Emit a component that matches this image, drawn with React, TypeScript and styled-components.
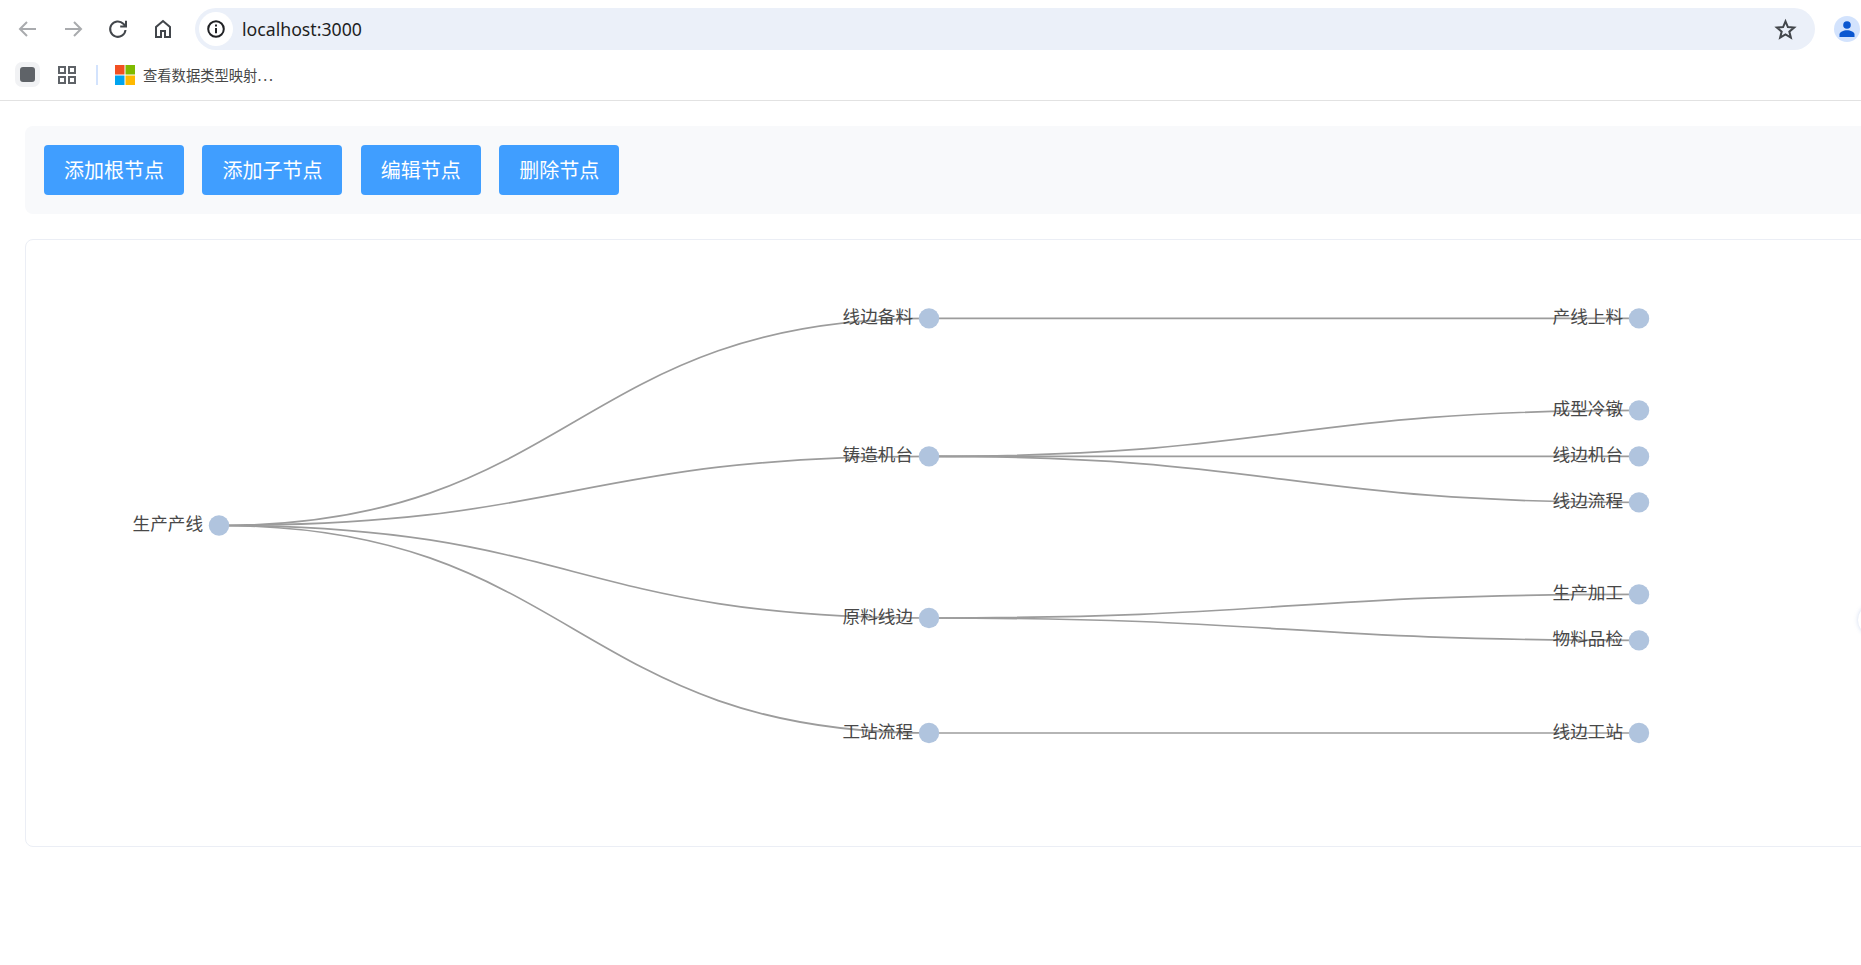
import React from "react";
import styled, { createGlobalStyle } from "styled-components";

const Global = createGlobalStyle`
  html, body { margin: 0; padding: 0; background: #fff; overflow: hidden; width: 1861px; height: 965px; }
  body { font-family: "Noto Sans CJK SC", "Liberation Sans", sans-serif; }
`;

const Page = styled.div`
  position: relative;
  width: 1861px;
  height: 965px;
  overflow: hidden;
  background: #fff;
`;

const Chrome = styled.header`
  height: 100px;
  border-bottom: 1px solid #e2e2e2;
  border-top-left-radius: 8px;
  display: flex;
  flex-direction: column;
  box-sizing: content-box;
`;

const NavRow = styled.div`
  height: 42px;
  margin-top: 8px;
  display: flex;
  align-items: center;
`;

const NavIcons = styled.div`
  width: 195px;
  padding-left: 16px;
  box-sizing: border-box;
  display: flex;
  align-items: center;
  gap: 21px;
  flex: none;
`;

const NavIcon = styled.svg<{ $dim?: boolean }>`
  width: 24px;
  height: 24px;
  flex: none;
  fill: none;
  stroke: ${(p) => (p.$dim ? "#a9abae" : "#42464b")};
  stroke-width: 2;
`;

const UrlBar = styled.div`
  width: 1620px;
  height: 42px;
  border-radius: 21px;
  background: #ebf0f9;
  display: flex;
  align-items: center;
  padding: 0 18.5px 0 4px;
  box-sizing: border-box;
  flex: none;
`;

const InfoBadge = styled.span`
  width: 34px;
  height: 34px;
  border-radius: 50%;
  background: #fff;
  display: flex;
  align-items: center;
  justify-content: center;
  flex: none;
`;

const UrlText = styled.span`
  margin-left: 9px;
  flex: 1;
  font-family: "Noto Sans", "Liberation Sans", sans-serif;
  font-size: 17.7px;
  color: #1f1f1f;
`;

const StarIcon = styled.svg`
  width: 23px;
  height: 23px;
  flex: none;
  fill: none;
  stroke: #42464b;
  stroke-width: 2.1;
`;

const Avatar = styled.span`
  width: 26px;
  height: 26px;
  margin-left: 19px;
  border-radius: 50%;
  background: #d3e3fd;
  display: flex;
  align-items: center;
  justify-content: center;
  flex: none;
`;

const BookmarkRow = styled.div`
  height: 25px;
  margin-top: 12px;
  padding-left: 15px;
  display: flex;
  align-items: center;
`;

const StopButton = styled.span`
  width: 25px;
  height: 25px;
  border-radius: 7px;
  background: #f1f2f4;
  display: flex;
  align-items: center;
  justify-content: center;
`;

const StopSquare = styled.span`
  width: 15px;
  height: 15px;
  border-radius: 3px;
  background: #5f6368;
`;

const AppsIcon = styled.svg`
  width: 18px;
  height: 18px;
  margin-left: 18px;
  fill: none;
  stroke: #5f6368;
  stroke-width: 2;
`;

const Divider = styled.span`
  width: 2px;
  height: 20px;
  margin-left: 20px;
  background: #d3e3fd;
`;

const LogoIcon = styled.svg`
  width: 20px;
  height: 20px;
  margin-left: 17px;
`;

const BookmarkText = styled.span`
  margin-left: 8px;
  font-size: 14.3px;
  line-height: 25px;
  color: #474747;
  white-space: nowrap;
`;

const BookmarkEllipsis = styled.span`
  letter-spacing: 1.8px;
`;

const Content = styled.main`
  width: 1900px;
  padding: 25px 0 0 25px;
  display: flex;
  flex-direction: column;
  gap: 25px;
`;

const Toolbar = styled.div`
  height: 88px;
  padding: 0 19px;
  background: #f8f9fb;
  border-radius: 8px;
  display: flex;
  align-items: center;
  gap: 18.4px;
`;

const ActionButton = styled.button`
  height: 50px;
  padding: 0 20px 2px;
  border: none;
  border-radius: 4px;
  background: #409eff;
  color: #fff;
  font-family: "Noto Sans CJK SC", sans-serif;
  font-size: 20px;
  font-weight: 400;
  cursor: pointer;
`;

const GraphCard = styled.section`
  height: 608px;
  box-sizing: border-box;
  border: 1px solid #ebeef5;
  border-radius: 8px;
  background: #fff;
`;

const GraphSvg = styled.svg`
  display: block;
  width: 1874px;
  height: 606px;
`;

const EdgePath = styled.path`
  fill: none;
  stroke: #9c9c9c;
  stroke-width: 1.7;
`;

const NodeDot = styled.circle`
  fill: #b0c4de;
`;

const NodeLabel = styled.text`
  font-family: "Noto Sans CJK SC", sans-serif;
  font-size: 17.6px;
  font-weight: 400;
  fill: #484848;
  text-anchor: end;
  dominant-baseline: central;
`;

const EdgeBubble = styled.span`
  position: absolute;
  left: 1858px;
  top: 604px;
  width: 32px;
  height: 32px;
  border-radius: 50%;
  background: #fff;
  box-shadow: 0 0 4px rgba(120, 150, 210, 0.35);
`;

type N = { id: string; x: number; y: number; parent?: string };
const OX = 26;
const OY = 240;
const nodes: N[] = [
  { id: "生产产线", x: 219, y: 525.5 },
  { id: "线边备料", x: 929, y: 318.4, parent: "生产产线" },
  { id: "铸造机台", x: 929, y: 456.4, parent: "生产产线" },
  { id: "原料线边", x: 929, y: 618, parent: "生产产线" },
  { id: "工站流程", x: 929, y: 733, parent: "生产产线" },
  { id: "产线上料", x: 1639, y: 318.4, parent: "线边备料" },
  { id: "成型冷镦", x: 1639, y: 410.4, parent: "铸造机台" },
  { id: "线边机台", x: 1639, y: 456.4, parent: "铸造机台" },
  { id: "线边流程", x: 1639, y: 502.4, parent: "铸造机台" },
  { id: "生产加工", x: 1639, y: 594.4, parent: "原料线边" },
  { id: "物料品检", x: 1639, y: 640.4, parent: "原料线边" },
  { id: "线边工站", x: 1639, y: 733, parent: "工站流程" },
];
const byId = Object.fromEntries(nodes.map((n) => [n.id, n]));

const edgeD = (n: N) => {
  const p = byId[n.parent!];
  const x1 = p.x - OX, y1 = p.y - OY, x2 = n.x - OX, y2 = n.y - OY;
  const m = (x1 + x2) / 2;
  return `M${x1} ${y1}C${m} ${y1} ${m} ${y2} ${x2} ${y2}`;
};

const buttons = ["添加根节点", "添加子节点", "编辑节点", "删除节点"];

export default function App() {
  return (
    <Page>
      <Global />
      <Chrome>
        <NavRow>
          <NavIcons>
            <NavIcon $dim viewBox="0 0 24 24"><path d="M20 12H5M11 5l-7 7 7 7" /></NavIcon>
            <NavIcon $dim viewBox="0 0 24 24"><path d="M4 12h15M13 5l7 7-7 7" /></NavIcon>
            <NavIcon viewBox="0 0 24 24"><path d="M19.5 13a7.7 7.7 0 1 1-2.2-6.3L20 9.2M20 3.8v5.8h-5.8" /></NavIcon>
            <NavIcon viewBox="0 0 24 24"><path d="M5 20V10l7-6 7 6v10h-5v-6h-4v6z" /></NavIcon>
          </NavIcons>
          <UrlBar>
            <InfoBadge>
              <svg width="20" height="20" viewBox="0 0 20 20" fill="none" stroke="#202124" strokeWidth="2">
                <circle cx="10" cy="10" r="7.8" />
                <path d="M10 9v5.2M10 5.4v2" />
              </svg>
            </InfoBadge>
            <UrlText>localhost:3000</UrlText>
            <StarIcon viewBox="0 0 24 24">
              <path d="M12 3.5l2.5 6 6.5.5-5 4.2 1.6 6.3L12 17.2l-5.6 3.3L8 14.2 3 10l6.5-.5z" />
            </StarIcon>
          </UrlBar>
          <Avatar>
            <svg width="18" height="18" viewBox="0 0 18 18" fill="#0b57d0">
              <circle cx="9" cy="5" r="3.8" />
              <path d="M1.5 17v-2.5c0-2.6 4-4.2 7.5-4.2s7.5 1.6 7.5 4.2V17z" />
            </svg>
          </Avatar>
        </NavRow>
        <BookmarkRow>
          <StopButton><StopSquare /></StopButton>
          <AppsIcon viewBox="0 0 18 18">
            <rect x="1" y="1" width="6" height="6" />
            <rect x="11" y="1" width="6" height="6" />
            <rect x="1" y="11" width="6" height="6" />
            <rect x="11" y="11" width="6" height="6" />
          </AppsIcon>
          <Divider />
          <LogoIcon viewBox="0 0 20 20">
            <rect width="9.5" height="9.5" fill="#f25022" />
            <rect x="10.5" width="9.5" height="9.5" fill="#7fba00" />
            <rect y="10.5" width="9.5" height="9.5" fill="#00a4ef" />
            <rect x="10.5" y="10.5" width="9.5" height="9.5" fill="#ffb900" />
          </LogoIcon>
          <BookmarkText>查看数据类型映射<BookmarkEllipsis>...</BookmarkEllipsis></BookmarkText>
        </BookmarkRow>
      </Chrome>
      <Content>
        <Toolbar>
          {buttons.map((b) => <ActionButton key={b}>{b}</ActionButton>)}
        </Toolbar>
        <GraphCard>
          <GraphSvg viewBox="0 0 1874 606">
            {nodes.filter((n) => n.parent).map((n) => <EdgePath key={n.id} d={edgeD(n)} />)}
            {nodes.map((n) => (
              <g key={n.id}>
                <NodeDot cx={n.x - OX} cy={n.y - OY} r={10.2} />
                <NodeLabel x={n.x - OX - 16} y={n.y - OY - 2.8}>{n.id}</NodeLabel>
              </g>
            ))}
          </GraphSvg>
        </GraphCard>
      </Content>
      <EdgeBubble />
    </Page>
  );
}
